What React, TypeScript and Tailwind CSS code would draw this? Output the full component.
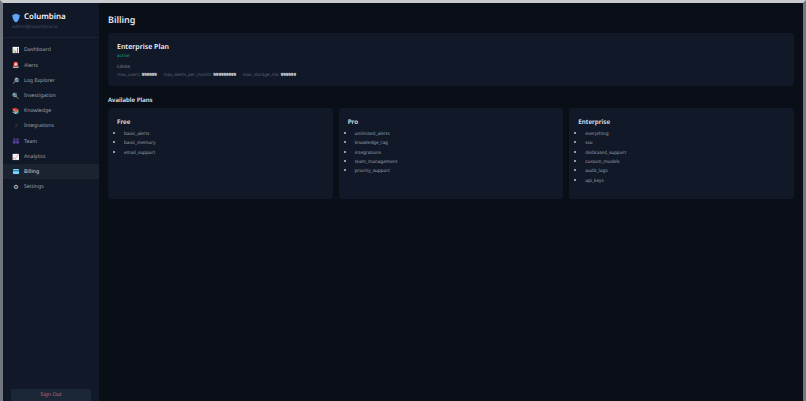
import * as React from 'react';

const TeamIcon = () => (
  <svg width="6" height="6" viewBox="0 0 6 6" fill="#5b3fa8">
    <rect x="0.3" y="0.6" width="2.2" height="2" />
    <rect x="3.4" y="0.6" width="2.2" height="2" />
    <rect x="0" y="3" width="2.6" height="2.6" />
    <rect x="3.3" y="3" width="2.6" height="2.6" />
  </svg>
);

const CardIcon = () => (
  <svg width="6" height="5" viewBox="0 0 6 5">
    <rect width="6" height="5" rx="0.5" fill="#7dd3fc" />
    <rect y="1.2" width="6" height="1" fill="#0e7490" />
  </svg>
);

const navItems: { icon: React.ReactNode; label: string; active?: boolean }[] = [
  { icon: '📊', label: 'Dashboard' },
  { icon: '🚨', label: 'Alerts' },
  { icon: '🔎', label: 'Log Explorer' },
  { icon: '🔍', label: 'Investigation' },
  { icon: '📚', label: 'Knowledge' },
  { icon: <span className="text-[#475569]">?</span>, label: 'Integrations' },
  { icon: <TeamIcon />, label: 'Team' },
  { icon: '📈', label: 'Analytics' },
  { icon: <CardIcon />, label: 'Billing', active: true },
  { icon: <span className="text-[#d1d5db]">{'⚙\uFE0E'}</span>, label: 'Settings' },
];

const plans = [
  { name: 'Free', features: ['basic_alerts', 'basic_memory', 'email_support'] },
  { name: 'Pro', features: ['unlimited_alerts', 'knowledge_rag', 'integrations', 'team_management', 'priority_support'] },
  { name: 'Enterprise', features: ['everything', 'sso', 'dedicated_support', 'custom_models', 'audit_logs', 'api_keys'] },
];

const limits = [
  { key: 'max_users', value: '999999' },
  { key: 'max_alerts_per_month', value: '999999999' },
  { key: 'max_storage_mb', value: '999999' },
];

export default function App() {
  return (
    <div className="h-[401px] w-[806px] overflow-hidden border-x-[3px] border-t-[3px] border-x-[#737880] border-t-[#c9cbce] font-['Noto_Sans',sans-serif] [text-rendering:geometricPrecision]">
      <div className="flex h-[398px] bg-[#0a0e17]">
        <aside className="flex w-[96px] shrink-0 flex-col bg-[#111827]">
          <div className="border-b border-[#1a2333] px-[9px] pb-[6px] pt-[9px]">
            <div className="flex items-center gap-[4px]">
              <svg width="8" height="10" viewBox="0 0 9 11">
                <path d="M4.5 0.3 C6 1.2 7.2 1.6 8.6 1.8 C8.7 5.6 7.4 8.9 4.5 10.7 C1.6 8.9 0.3 5.6 0.4 1.8 C1.8 1.6 3 1.2 4.5 0.3 Z" fill="#60a5fa" />
              </svg>
              <span className="text-[7.9px] font-semibold leading-[11px] text-[#f1f5f9]">Columbina</span>
            </div>
            <div className="mt-[1px] text-[4.6px] leading-[7px] text-[#475569]">admin@columbina.io</div>
          </div>
          <nav className="flex flex-col pt-[4.7px]">
            {navItems.map((item) => (
              <div
                key={item.label}
                className={`flex h-[15.2px] items-center gap-[5px] pl-[10px] text-[5.2px] ${
                  item.active ? 'bg-[#1a2431] text-[#d5dbe4]' : 'text-[#9aa2af]'
                }`}
              >
                <span className="flex w-[6px] items-center justify-center text-[6px] leading-none">{item.icon}</span>
                <span>{item.label}</span>
              </div>
            ))}
          </nav>
          <div className="mt-auto px-[8px]">
            <div className="flex h-[12px] items-center justify-center rounded-t-[1px] bg-[#1b2636] text-[5.25px] text-[#d0687a]">
              Sign Out
            </div>
          </div>
        </aside>
        <main className="min-w-0 flex-1 px-[9px] pt-[10px]">
          <h1 className="text-[9px] font-semibold leading-[14px] text-[#e2e8f0]">Billing</h1>
          <section className="mt-[6px] h-[53px] rounded-[3px] bg-[#111827] px-[9px] pt-[8.5px]">
            <div className="text-[7px] font-semibold leading-[11px] text-[#f1f5f9]">Enterprise Plan</div>
            <div className="text-[4.6px] leading-[7px] text-[#12a87a]">active</div>
            <div className="mt-[4px] text-[4.6px] leading-[7px] text-[#8b93a1]">Limits</div>
            <div className="mt-[1px] flex gap-[6.5px] text-[4.45px] leading-[7px] text-[#5b6577]">
              {limits.map((l) => (
                <span key={l.key}>
                  {l.key}: <b className="font-bold text-[#f1f5f9]">{l.value}</b>
                </span>
              ))}
            </div>
          </section>
          <h2 className="mt-[9px] text-[6.1px] font-semibold leading-[10px] text-[#e2e8f0]">Available Plans</h2>
          <div className="mt-[3px] grid grid-cols-3 gap-[6px]">
            {plans.map((plan) => (
              <div key={plan.name} className="h-[91px] rounded-[3px] bg-[#111827] px-[9px] pt-[9px]">
                <div className="text-[6.3px] font-semibold leading-[10px] text-[#e2e8f0]">{plan.name}</div>
                <ul className="mt-[2px] list-disc pl-[7px] text-[4.65px] leading-[9.33px] text-[#9aa2af] marker:text-[7px] marker:text-[#c0c4cc]">
                  {plan.features.map((f) => (
                    <li key={f} className="h-[9.33px]">{f}</li>
                  ))}
                </ul>
              </div>
            ))}
          </div>
        </main>
      </div>
    </div>
  );
}
